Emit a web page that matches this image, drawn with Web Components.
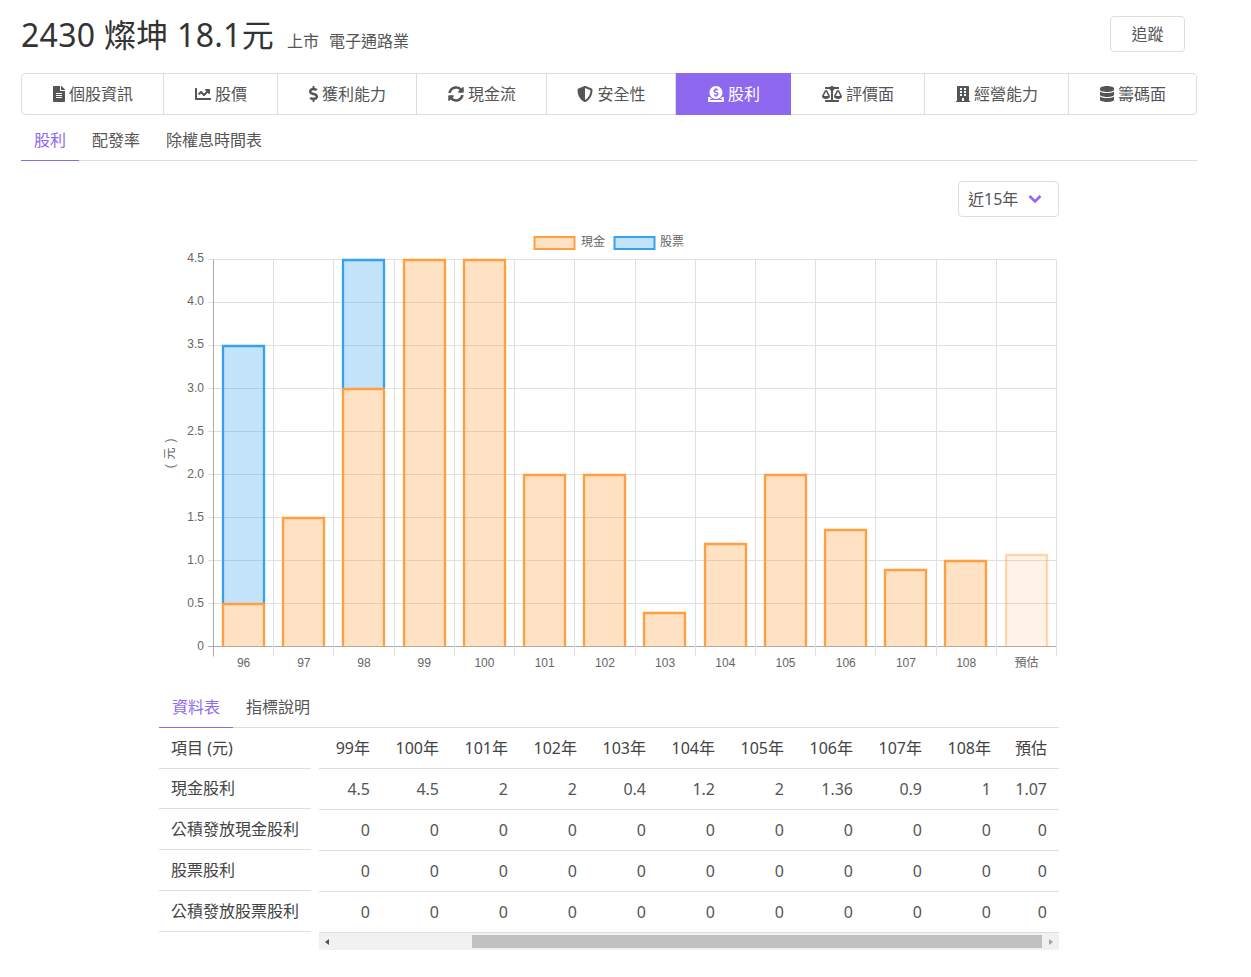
<!doctype html>
<html lang="zh-Hant">
<head>
<meta charset="utf-8">
<title>2430 燦坤</title>
<style>
  html, body { margin: 0; background: #fff; }
  body { font-family: "Noto Sans", "Noto Sans CJK TC", sans-serif; color: #333; }
</style>
</head>
<body>
<stock-page></stock-page>
<script>
const ICONS = {
  file: [384, "M224 136V0H24C10.7 0 0 10.7 0 24v464c0 13.3 10.7 24 24 24h336c13.3 0 24-10.7 24-24V160H248c-13.2 0-24-10.8-24-24zm64 236c0 6.6-5.4 12-12 12H108c-6.6 0-12-5.4-12-12v-8c0-6.6 5.4-12 12-12h168c6.6 0 12 5.4 12 12v8zm0-64c0 6.6-5.4 12-12 12H108c-6.6 0-12-5.4-12-12v-8c0-6.6 5.4-12 12-12h168c6.6 0 12 5.4 12 12v8zm0-72v8c0 6.6-5.4 12-12 12H108c-6.6 0-12-5.4-12-12v-8c0-6.6 5.4-12 12-12h168c6.6 0 12 5.4 12 12zm96-114.1v6.1H256V0h6.1c6.4 0 12.5 2.5 17 7l97.9 98c4.5 4.5 7 10.6 7 16.9z"],
  chart: [512, "M496 384H64V80c0-8.84-7.16-16-16-16H16C7.16 64 0 71.16 0 80v336c0 17.67 14.33 32 32 32h464c8.84 0 16-7.16 16-16v-32c0-8.84-7.16-16-16-16zM464 96H345.94c-21.38 0-32.09 25.85-16.97 40.97l32.4 32.4L288 242.75l-73.37-73.37c-12.5-12.5-32.76-12.5-45.25 0l-68.69 68.69c-6.25 6.25-6.25 16.38 0 22.63l22.62 22.62c6.25 6.25 16.38 6.25 22.63 0L192 237.25l73.37 73.37c12.5 12.5 32.76 12.5 45.25 0l96-96 32.4 32.4c15.12 15.12 40.97 4.41 40.97-16.97V112c.01-8.84-7.15-16-15.99-16z"],
  dollar: [288, "M209.2 233.4l-108-31.6C88.7 198.2 80 186.5 80 173.5c0-16.3 13.2-29.5 29.5-29.5h66.3c12.2 0 24.2 3.7 34.2 10.5 6.1 4.1 14.3 3.1 19.5-2l34.8-34c7.1-6.9 6.1-18.4-1.8-24.5C238 74.8 207.4 64.1 176 64V16c0-8.8-7.2-16-16-16h-32c-8.8 0-16 7.2-16 16v48h-2.5C45.8 64-5.4 118.7.5 183.6c4.2 46.1 39.4 83.6 83.8 96.6l102.5 30c12.5 3.7 21.2 15.3 21.2 28.3 0 16.3-13.2 29.5-29.5 29.5h-66.3C100 368 88 364.3 78 357.5c-6.1-4.1-14.3-3.1-19.5 2l-34.8 34c-7.1 6.9-6.1 18.4 1.8 24.5 24.5 19.2 55.1 29.9 86.5 30v48c0 8.8 7.2 16 16 16h32c8.8 0 16-7.2 16-16v-48.2c46.6-.9 90.3-28.6 105.7-72.7 21.5-61.6-14.6-124.8-72.5-141.7z"],
  sync: [512, "M370.72 133.28C339.458 104.008 298.888 87.962 255.848 88c-77.458.068-144.328 53.178-162.791 126.85-1.344 5.363-6.122 9.15-11.651 9.15H24.103c-7.498 0-13.194-6.807-11.807-14.176C33.933 94.924 134.813 8 256 8c66.448 0 126.791 26.136 171.315 68.685L463.03 40.97C478.149 25.851 504 36.559 504 57.941V192c0 13.255-10.745 24-24 24H345.941c-21.382 0-32.09-25.851-16.971-40.971l41.75-41.749zM32 296h134.059c21.382 0 32.09 25.851 16.971 40.971l-41.75 41.75c31.262 29.273 71.835 45.319 114.876 45.28 77.418-.07 144.315-53.144 162.787-126.849 1.344-5.363 6.122-9.15 11.651-9.15h57.304c7.498 0 13.194 6.807 11.807 14.176C478.067 417.076 377.187 504 256 504c-66.448 0-126.791-26.136-171.315-68.685L48.97 471.03C33.851 486.149 8 475.441 8 454.059V320c0-13.255 10.745-24 24-24z"],
  shield: [512, "M466.5 83.7l-192-80a48.15 48.15 0 0 0-36.9 0l-192 80C27.7 91.1 16 108.6 16 128c0 198.5 114.5 335.7 221.5 380.3 11.8 4.9 25.1 4.9 36.9 0C360.1 472.6 496 349.3 496 128c0-19.4-11.7-36.9-29.5-44.3zM256.1 446.3l-.1-381 175.9 73.3c-3.3 151.4-82.1 261.1-175.8 307.7z"],
  donate: [512, "M256 416c114.9 0 208-93.1 208-208S370.9 0 256 0 48 93.1 48 208s93.1 208 208 208zM233.8 97.4V80.6c0-9.2 7.4-16.6 16.6-16.6h11.1c9.2 0 16.6 7.4 16.6 16.6v17c15.5.8 30.5 6.1 43 15.4 5.6 4.1 6.2 12.3 1.2 17.1L306 145.6c-3.8 3.7-9.5 3.8-14 1-5.4-3.4-11.4-5.1-17.8-5.1h-38.9c-9 0-16.3 8.2-16.3 18.3 0 8.2 5 15.5 12.1 17.6l62.3 18.7c25.7 7.7 43.7 32.4 43.7 60.1 0 34-26.4 61.5-59.1 62.4v16.8c0 9.2-7.4 16.6-16.6 16.6h-11.1c-9.2 0-16.6-7.4-16.6-16.6v-17c-15.5-.8-30.5-6.1-43-15.4-5.6-4.1-6.2-12.3-1.2-17.1l16.3-15.5c3.8-3.7 9.5-3.8 14-1 5.4 3.4 11.4 5.1 17.8 5.1h38.9c9 0 16.3-8.2 16.3-18.3 0-8.2-5-15.5-12.1-17.6l-62.3-18.7c-25.7-7.7-43.7-32.4-43.7-60.1.1-34 26.4-61.5 59.1-62.4zM480 352h-32.5c-19.6 26-44.6 47.7-73 64h63.8c5.3 0 9.6 3.6 9.6 8v16c0 4.4-4.3 8-9.6 8H73.6c-5.3 0-9.6-3.6-9.6-8v-16c0-4.4 4.3-8 9.6-8h63.8c-28.4-16.3-53.3-38-73-64H32c-17.7 0-32 14.3-32 32v96c0 17.7 14.3 32 32 32h448c17.7 0 32-14.3 32-32v-96c0-17.7-14.3-32-32-32z"],
  scale: [640, "M256 336h-.02c0-16.18 1.34-8.73-85.05-181.51-17.65-35.29-68.19-35.36-85.87 0C-2.06 328.75.02 320.33.02 336H0c0 44.18 57.31 80 128 80s128-35.82 128-80zM128 176l72 144H56l72-144zm511.98 160c0-16.18 1.34-8.73-85.05-181.51-17.65-35.29-68.19-35.36-85.87 0-87.12 174.26-85.04 165.84-85.04 181.51H384c0 44.18 57.31 80 128 80s128-35.82 128-80h-.02zM440 320l72-144 72 144H440zm88 128H352V153.25c23.51-10.29 41.16-31.48 46.39-57.25H528c8.84 0 16-7.16 16-16V48c0-8.84-7.16-16-16-16H383.64C369.04 12.68 346.09 0 320 0s-49.04 12.68-63.64 32H112c-8.84 0-16 7.16-16 16v32c0 8.84 7.16 16 16 16h129.61c5.23 25.76 22.87 46.96 46.39 57.25V448H112c-8.84 0-16 7.16-16 16v32c0 8.84 7.16 16 16 16h416c8.84 0 16-7.16 16-16v-32c0-8.84-7.16-16-16-16z"],
  building: [448, "M436 480h-20V24c0-13.255-10.745-24-24-24H56C42.745 0 32 10.745 32 24v456H12c-6.627 0-12 5.373-12 12v20h448v-20c0-6.627-5.373-12-12-12zM128 76c0-6.627 5.373-12 12-12h40c6.627 0 12 5.373 12 12v40c0 6.627-5.373 12-12 12h-40c-6.627 0-12-5.373-12-12V76zm0 96c0-6.627 5.373-12 12-12h40c6.627 0 12 5.373 12 12v40c0 6.627-5.373 12-12 12h-40c-6.627 0-12-5.373-12-12v-40zm52 148h-40c-6.627 0-12-5.373-12-12v-40c0-6.627 5.373-12 12-12h40c6.627 0 12 5.373 12 12v40c0 6.627-5.373 12-12 12zm76 160h-64v-84c0-6.627 5.373-12 12-12h40c6.627 0 12 5.373 12 12v84zm64-172c0 6.627-5.373 12-12 12h-40c-6.627 0-12-5.373-12-12v-40c0-6.627 5.373-12 12-12h40c6.627 0 12 5.373 12 12v40zm0-96c0 6.627-5.373 12-12 12h-40c-6.627 0-12-5.373-12-12v-40c0-6.627 5.373-12 12-12h40c6.627 0 12 5.373 12 12v40zm0-96c0 6.627-5.373 12-12 12h-40c-6.627 0-12-5.373-12-12V76c0-6.627 5.373-12 12-12h40c6.627 0 12 5.373 12 12v40z"],
  database: [448, "M448 73.143v45.714C448 159.143 347.667 192 224 192S0 159.143 0 118.857V73.143C0 32.857 100.333 0 224 0s224 32.857 224 73.143zM448 176v102.857C448 319.143 347.667 352 224 352S0 319.143 0 278.857V176c48.125 33.143 136.208 48.572 224 48.572S399.875 209.143 448 176zm0 160v102.857C448 479.143 347.667 512 224 512S0 479.143 0 438.857V336c48.125 33.143 136.208 48.572 224 48.572S399.875 369.143 448 336z"],
}

const PURPLE = "#8e68ef"
const LINE = "#dedede"

function iconSvg(name) {
  const [width, d] = ICONS[name]
  return `<svg viewBox="0 0 ${width} 512" width="${width / 32}" height="16" fill="currentColor"><path d="${d}"/></svg>`
}

class StockHeader extends HTMLElement {
  constructor() {
    super()
    this.attachShadow({ mode: "open" }).innerHTML = `
      <style>
        :host { display: flex; height: 73px; box-sizing: border-box; color: #333; }
        h1 { margin: 13px 0 0; font-size: 32px; font-weight: 400; line-height: 44px; letter-spacing: .28px; }
        .meta { margin: 30px 0 0 13px; font-size: 16px; line-height: 22px; color: #555; display: flex; gap: 10px; }
        button {
          margin: 16px 12px 0 auto; width: 75px; height: 36px; padding: 0 0 2px; background: #fff;
          border: 1px solid ${LINE}; border-radius: 4px; font: inherit; font-size: 16px; color: #555;
        }
      </style>
      <h1><slot name="title"></slot></h1>
      <div class="meta"><slot name="meta"></slot></div>
      <button>追蹤</button>
    `
  }
}

class NavBar extends HTMLElement {
  constructor() {
    super()
    this.attachShadow({ mode: "open" }).innerHTML = `
      <style>
        :host {
          display: grid; height: 42px; box-sizing: border-box; width: 1176px;
          grid-template-columns: 142px 114px 139px 130px 129px 115px 134px 144px 1fr;
          border: 1px solid ${LINE}; border-radius: 4px;
        }
      </style>
      <slot></slot>
    `
  }
}

class NavItem extends HTMLElement {
  constructor() {
    super()
    const icon = iconSvg(this.getAttribute("icon"))
    this.attachShadow({ mode: "open" }).innerHTML = `
      <style>
        :host {
          display: flex; align-items: center; justify-content: center; gap: 4px;
          padding: 0 0 2px 1px;
          font-size: 16px; color: #555; border-right: 1px solid ${LINE}; position: relative;
        }
        :host(:last-child) { border-right: 0; }
        :host([active]) { color: #fff; border-right: 0; }
        .fill { display: none; position: absolute; inset: -1px 0 -1px 0; background: ${PURPLE}; }
        :host([active]) .fill { display: block; }
        svg, span { position: relative; }
        svg { top: 1px; }
      </style>
      <div class="fill"></div>
      ${icon}<span><slot></slot></span>
    `
  }
}

class TabBar extends HTMLElement {
  constructor() {
    super()
    this.attachShadow({ mode: "open" }).innerHTML = `
      <style>
        :host { display: flex; border-bottom: 1px solid ${LINE}; font-size: 16px; }
      </style>
      <slot></slot>
    `
  }
}

class TabItem extends HTMLElement {
  constructor() {
    super()
    this.attachShadow({ mode: "open" }).innerHTML = `
      <style>
        :host {
          display: block; padding: 0 13px; line-height: 22px; color: #555;
          padding-top: var(--tab-top, 14px); padding-bottom: var(--tab-bottom, 9px);
          margin-bottom: -1px; border-bottom: 1px solid transparent;
        }
        :host([active]) { color: ${PURPLE}; border-bottom-color: ${PURPLE}; }
      </style>
      <slot></slot>
    `
  }
}

class RangeSelect extends HTMLElement {
  constructor() {
    super()
    this.attachShadow({ mode: "open" }).innerHTML = `
      <style>
        :host {
          display: flex; align-items: center; justify-content: space-between; box-sizing: border-box;
          width: 101px; height: 36px; padding: 0 16px 2px 9px; margin-left: auto;
          border: 1px solid ${LINE}; border-radius: 4px; font-size: 16px; color: #555;
        }
        svg { position: relative; top: 1px; }
      </style>
      <slot></slot>
      <svg width="14" height="10" viewBox="0 0 14 10" fill="none" stroke="${PURPLE}" stroke-width="2.6"><path d="M1.5 2 7 7.5 12.5 2"/></svg>
    `
  }
}

class DividendChart extends HTMLElement {
  connectedCallback() {
    const left = 213.5, right = 1056.5, top = 259.5, base = 646.5
    const step = (right - left) / 14
    const yOf = v => base - (v / 4.5) * (base - top)
    const labels = ["96", "97", "98", "99", "100", "101", "102", "103", "104", "105", "106", "107", "108", "預估"]
    const cash = [0.5, 1.5, 3, 4.5, 4.5, 2, 2, 0.4, 1.2, 2, 1.36, 0.9, 1, 1.07]
    const stock = { 0: 3, 2: 1.5 }
    const bar = (i, from, to, stroke, fill) => {
      const x0 = Math.round(left + i * step + 9.4), x1 = x0 + 41
      const y0 = yOf(from), y1 = Math.floor(yOf(to) + 1)
      return `<rect x="${x0}" y="${y1}" width="41" height="${y0 - y1}" fill="${fill}"/>
        <path d="M${x0} ${y0}V${y1}H${x1}V${y0}" fill="none" stroke="${stroke}" stroke-width="2.3"/>`
    }
    let grid = "", text = "", bars = ""
    for (let i = 0; i <= 9; i++) {
      const y = top + (i * (base - top)) / 9
      const v = 4.5 - i * 0.5
      const isBase = i === 9
      grid += `<path d="M208 ${y}H${right}" stroke="${isBase ? "#aaa" : "#e0e0e0"}"/>`
      text += `<text x="204" y="${y + (i < 3 ? 2 : 3)}" text-anchor="end">${v === 0 ? "0" : v.toFixed(1)}</text>`
    }
    for (let i = 0; i <= 14; i++) {
      const x = left + i * step
      const snapped = Math.floor(x) + 0.5
      grid += `<path d="M${snapped} ${top}V656.5" stroke="${i === 0 ? "#aaa" : "#e0e0e0"}"/>`
      if (i < 14) text += `<text x="${x + step / 2}" y="666.5" text-anchor="middle">${labels[i]}</text>`
    }
    cash.forEach((v, i) => {
      if (stock[i]) bars += bar(i, v, v + stock[i], "#36a2eb", "rgba(54,162,235,.3)")
      bars += i === 13
        ? bar(i, 0, v, "rgba(255,159,64,.4)", "rgba(255,159,64,.12)")
        : bar(i, 0, v, "#ff9f40", "rgba(255,159,64,.31)")
    })
    this.attachShadow({ mode: "open" }).innerHTML = `
      <style>
        :host { display: block; height: 459px; }
        svg { display: block; }
        text { font: 12px "Liberation Sans", "Noto Sans CJK TC", sans-serif; fill: #666; }
      </style>
      <svg width="900" height="459" viewBox="159 221 900 459">
        <rect x="534.5" y="237" width="40" height="12" fill="rgba(255,159,64,.31)" stroke="#ff9f40" stroke-width="2"/>
        <text x="581" y="246">現金</text>
        <rect x="614.5" y="237" width="40" height="12" fill="rgba(54,162,235,.3)" stroke="#36a2eb" stroke-width="2"/>
        <text x="660" y="246">股票</text>
        ${grid}${bars}${text}
        <text transform="translate(174 453) rotate(-90)" text-anchor="middle" letter-spacing=".8">( 元 )</text>
      </svg>
    `
  }
}

class DataTable extends HTMLElement {
  connectedCallback() {
    const years = ["99年", "100年", "101年", "102年", "103年", "104年", "105年", "106年", "107年", "108年", "預估"]
    const rows = [
      ["現金股利", ["4.5", "4.5", "2", "2", "0.4", "1.2", "2", "1.36", "0.9", "1", "1.07"]],
      ["公積發放現金股利", Array(11).fill("0")],
      ["股票股利", Array(11).fill("0")],
      ["公積發放股票股利", Array(11).fill("0")],
    ]
    const cells = list => list.map(v => `<div class="num">${v}</div>`).join("")
    this.attachShadow({ mode: "open" }).innerHTML = `
      <style>
        :host { display: grid; grid-template-columns: 152px 740px; column-gap: 8px; font-size: 16px; color: #555; }
        .side div { height: 41px; box-sizing: border-box; padding: 0 12px; line-height: 40px; border-bottom: 1px solid ${LINE}; color: #444; white-space: nowrap; }
        .side div:nth-child(2) { height: 40px; line-height: 39px; }
        .grid { display: grid; grid-template-columns: 63px repeat(9, 69px) 56px; grid-auto-rows: 41px; }
        .num { box-sizing: border-box; text-align: right; padding-right: 12px; line-height: 41px; border-bottom: 1px solid ${LINE}; }
        .grid > .num:nth-child(-n + 11) { line-height: 40px; color: #444; }
      </style>
      <div class="side">
        <div>項目 (元)</div>
        ${rows.map(r => `<div>${r[0]}</div>`).join("")}
      </div>
      <div>
        <div class="grid">
          ${cells(years)}
          ${rows.map(r => cells(r[1])).join("")}
        </div>
        <table-scrollbar></table-scrollbar>
      </div>
    `
  }
}

class TableScrollbar extends HTMLElement {
  constructor() {
    super()
    this.attachShadow({ mode: "open" }).innerHTML = `
      <style>
        :host { display: flex; align-items: center; height: 17px; background: #f1f1f1; }
        .thumb { flex: none; width: 570px; height: 13px; margin-left: 143px; background: #c1c1c1; }
        .arrow { flex: none; width: 0; height: 0; border-style: solid; border-color: transparent; border-width: 3.5px; }
        .back { margin-left: 6px; border-left-width: 0; border-right: 4px solid #505050; }
        .next { margin-left: 7px; border-right-width: 0; border-left: 4px solid #a3a3a3; }
      </style>
      <div class="arrow back"></div>
      <div class="thumb"></div>
      <div class="arrow next"></div>
    `
  }
}

class StockPage extends HTMLElement {
  constructor() {
    super()
    this.attachShadow({ mode: "open" }).innerHTML = `
      <style>
        :host { display: block; width: 1176px; margin-left: 21px; }
        .section { width: 900px; margin: 0 auto; }
        range-select { margin-top: 20px; }
        .data-tabs { --tab-top: 16px; --tab-bottom: 9px; }
      </style>
      <stock-header>
        <span slot="title">2430 燦坤 18.1元</span>
        <span slot="meta">上市</span>
        <span slot="meta">電子通路業</span>
      </stock-header>
      <nav-bar>
        <nav-item icon="file">個股資訊</nav-item>
        <nav-item icon="chart">股價</nav-item>
        <nav-item icon="dollar">獲利能力</nav-item>
        <nav-item icon="sync">現金流</nav-item>
        <nav-item icon="shield">安全性</nav-item>
        <nav-item icon="donate" active>股利</nav-item>
        <nav-item icon="scale">評價面</nav-item>
        <nav-item icon="building">經營能力</nav-item>
        <nav-item icon="database">籌碼面</nav-item>
      </nav-bar>
      <tab-bar>
        <tab-item active>股利</tab-item>
        <tab-item>配發率</tab-item>
        <tab-item>除權息時間表</tab-item>
      </tab-bar>
      <div class="section">
        <range-select>近15年</range-select>
        <dividend-chart style="margin-top:4px"></dividend-chart>
        <tab-bar class="data-tabs">
          <tab-item active>資料表</tab-item>
          <tab-item>指標說明</tab-item>
        </tab-bar>
        <data-table></data-table>
      </div>
    `
  }
}

customElements.define("stock-header", StockHeader)
customElements.define("nav-bar", NavBar)
customElements.define("nav-item", NavItem)
customElements.define("tab-bar", TabBar)
customElements.define("tab-item", TabItem)
customElements.define("range-select", RangeSelect)
customElements.define("dividend-chart", DividendChart)
customElements.define("table-scrollbar", TableScrollbar)
customElements.define("data-table", DataTable)
customElements.define("stock-page", StockPage)
</script>
</body>
</html>
